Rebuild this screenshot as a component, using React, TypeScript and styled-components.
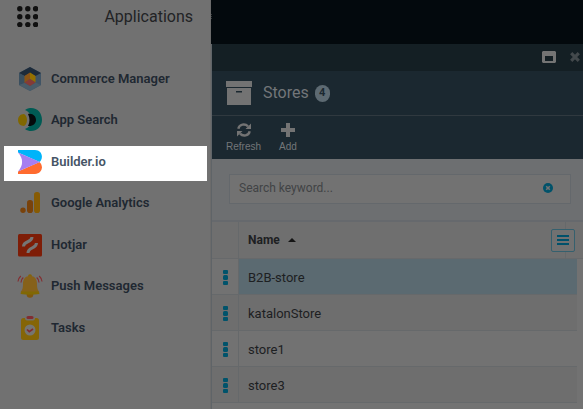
import React from "react";
import styled, { createGlobalStyle } from "styled-components";

const GlobalStyle = createGlobalStyle`
  *, *::before, *::after { box-sizing: border-box; }
  html, body { margin: 0; height: 100%; overflow: hidden; }
  body { background: #737373; font-family: Roboto, "Liberation Sans", sans-serif; color: #1d2022; }
  #root { height: 100%; }
  button { border: 0; padding: 0; background: none; font: inherit; color: inherit; cursor: pointer; }
  svg { display: block; flex: none; }
`;

const Page = styled.div`
  display: grid;
  grid-template-columns: 211px minmax(0, 1fr);
  height: 100vh;
`;

const Sidebar = styled.aside`
  background: #717171;
  border-right: 1px solid #6b6b6b;
`;

const SidebarHeader = styled.header`
  display: flex;
  justify-content: space-between;
  align-items: center;
  height: 33px;
  padding: 0 17px;
`;

const SidebarTitle = styled.h1`
  margin: 0;
  font-size: 16px;
  line-height: 24px;
  font-weight: 400;
  color: #222325;
`;

const AppList = styled.ul`
  display: grid;
  grid-template-rows: repeat(7, 1fr);
  height: 290px;
  margin: 25px 3px 0 4px;
  padding: 0;
  list-style: none;
`;

const AppLink = styled.a<{ $active?: boolean }>`
  display: flex;
  align-items: center;
  gap: 8px;
  height: 35px;
  margin-top: 5px;
  padding: 0 13px 3px;
  background: ${(p) => (p.$active ? "#ffffff" : "transparent")};
  color: ${(p) => (p.$active ? "#465566" : "#202831")};
  font-size: 13px;
  line-height: 16px;
  font-weight: 600;
  text-decoration: none;
`;

const Workspace = styled.main`
  display: flex;
  flex-direction: column;
  min-width: 0;
`;

const TopBar = styled.div`
  height: 44px;
  flex: none;
  padding-top: 14px;
  background: #03090d;
`;

const Blade = styled.section`
  flex: 1;
  display: flex;
  flex-direction: column;
  border-left: 1px solid #5f6468;
  background: #737373;
`;

const WindowBar = styled.div`
  display: flex;
  justify-content: flex-end;
  align-items: center;
  gap: 14px;
  height: 27px;
  padding: 0 3px 2px 0;
  background: #141f24;
`;

const BladeHeader = styled.header`
  display: flex;
  align-items: center;
  height: 45px;
  padding: 0 14px;
  background: #1b2830;
  border-bottom: 1px solid #30393f;
`;

const BladeTitle = styled.h2`
  margin: 0 6px 0 11px;
  font-size: 16px;
  line-height: 24px;
  font-weight: 400;
  color: #737679;
`;

const Count = styled.span`
  width: 15px;
  height: 17px;
  border-radius: 8px;
  background: #5d6a72;
  color: #1b2830;
  font-size: 11px;
  line-height: 16px;
  font-weight: 700;
  text-align: center;
`;

const Toolbar = styled.div`
  display: flex;
  gap: 18px;
  height: 43px;
  padding: 7px 14px 0;
  background: #1b2830;
`;

const ToolButton = styled.button`
  display: flex;
  flex-direction: column;
  align-items: center;
  gap: 4px;
  color: #737679;
  font-family: "Liberation Sans", Arial, sans-serif;
  font-size: 10px;
  line-height: 12px;
`;

const SearchArea = styled.div`
  padding: 15px 12px 15px 17px;
  height: 63px;
  background: #6d6f71;
  border-bottom: 2px solid #66696d;
`;

const SearchBox = styled.div`
  display: flex;
  align-items: center;
  height: 30px;
  padding: 0 17px 2px 9px;
  background: #727272;
  border: 1px solid #64686c;
`;

const SearchInput = styled.input`
  flex: 1;
  min-width: 0;
  padding: 0;
  border: 0;
  outline: 0;
  background: transparent;
  font: 400 12px/16px Roboto, "Liberation Sans", sans-serif;
  color: #1d2022;
  &::placeholder { color: #414345; opacity: 1; }
`;

const Table = styled.table`
  width: 100%;
  border-collapse: separate;
  border-spacing: 0;
  table-layout: fixed;
  font-size: 13px;
  line-height: 16px;
  text-align: left;
`;

const Column = styled.col<{ $width?: number }>`
  width: ${(p) => (p.$width ? `${p.$width}px` : "auto")};
`;

const HeadCell = styled.th`
  height: 37px;
  padding: 0 0 0 9px;
  background: #6f6f6f;
  border-right: 1px solid #66696b;
  border-bottom: 1px solid #67696b;
  font-size: 12px;
  &:last-child { padding: 0; border-right: 0; }
`;

const SortButton = styled.button`
  display: flex;
  align-items: center;
  gap: 8px;
  font-weight: 700;
`;

const ColumnsButton = styled.button`
  display: grid;
  place-items: center;
  width: 24px;
  height: 23px;
  margin-left: -15px;
  background: #717171;
  border: 1px solid #35606e;
  border-radius: 2px;
`;

const Row = styled.tr<{ $selected?: boolean }>`
  --row-color: #727272;
  &:nth-child(even) { --row-color: #6e6e6e; }
  td:nth-child(2) { background: ${(p) => (p.$selected ? "#5b6a71" : "var(--row-color)")}; }
`;

const Cell = styled.td`
  height: 36px;
  padding: 2px 0 0 9px;
  background: var(--row-color);
  border-bottom: 1px solid #66696b;
  &:first-child { padding: 1px 0 0 11px; border-right: 1px solid #66696b; }
`;

const Gutter = styled.td`
  padding: 0;
  background: #727272;
`;

const RowMenu = styled.button`
  display: block;
`;

const DotsIcon = () => (
  <svg width="21" height="21" viewBox="0 0 21 21" fill="#101010">
    {[2.8, 10.8, 18.6].map((y) =>
      [2.8, 10.8, 18.6].map((x) => <circle key={`${x}-${y}`} cx={x} cy={y} r="2.7" />)
    )}
  </svg>
);

const CubeIcon = () => (
  <svg width="26" height="26" viewBox="0 0 26 26">
    <path d="M13 1 24 7v12L13 25 2 19V7z" fill="#405465" />
    <path d="M13 1 24 7 18.500 10 13 7 7.500 10 2 7z" fill="#1d2b3a" />
    <path d="M2 7l5.500 3v7L2 19z" fill="#3a4f5f" />
    <path d="M13 25l11-6-5.500-2.500L13 20l-5.500-3L2 19z" fill="#4a5d6a" />
    <path d="M13 6.500 7.500 10v7L13 13z" fill="#8b5415" />
    <path d="M13 6.500 18.500 10v6.500L13 13z" fill="#957000" />
    <path d="M13 13l5.500 3.500L13 20l-5.500-3.500z" fill="#853b37" />
  </svg>
);

const AppSearchIcon = () => (
  <svg width="26" height="26" viewBox="0 0 26 26">
    <path d="M8 3C11 1 13 1 14 1c7 0 11 5.500 11 12s-5 11-11 11c-2 0-4-.500-6-2C17 19 17 7 8 3z" fill="#005b54" />
    <path d="M11 7c5-1 8 2.500 8 6s-3 6.500-8 6c2-4 2-8 0-12z" fill="#050a0b" />
    <path d="M7 7c4 2 4 10 0 12-8 0-8-12 0-12z" fill="#806700" />
  </svg>
);

const BuilderIcon = () => (
  <svg width="26" height="26" viewBox="0 0 26 26">
    <path d="M1 1h17C25 1 27 9 22.500 13L1 3.500z" fill="#00b4fa" />
    <path d="M1 25h17c7 0 9-8 4.500-12L1 22.500z" fill="#ff6b2f" />
    <path d="M1 3.500 23 13 1 22.500c5.500-6 5.500-13 0-19z" fill="#a67ef1" />
  </svg>
);

const AnalyticsIcon = () => (
  <svg width="26" height="26" viewBox="0 0 26 26">
    <rect x="17" y="2" width="6" height="21" rx="2.800" fill="#875b04" />
    <rect x="10" y="10" width="6" height="13" rx="2.800" fill="#79420b" />
    <circle cx="6" cy="20.300" r="2.700" fill="#79420b" />
  </svg>
);

const HotjarIcon = () => (
  <svg width="26" height="26" viewBox="0 0 26 26">
    <rect x="1" y="2" width="24" height="22.500" rx="1.500" fill="#7e1d07" />
    <path d="M15 5c0 6-8.500 3.500-8.500 9.500M19.500 11c0 6-8.500 3.500-8.500 10" fill="none" stroke="#757575" strokeWidth="3" />
  </svg>
);

const BellIcon = () => (
  <svg width="26" height="26" viewBox="0 0 26 26">
    <circle cx="13" cy="21.500" r="3.300" fill="#80570d" />
    <circle cx="13" cy="3.200" r="2" fill="#846408" />
    <path d="M13 3c5 0 7 3.500 7 8 0 5 1 6 2.500 8.500h-19C5 17 6 16 6 11c0-4.500 2-8 7-8z" fill="#86611a" />
    <path d="M4.500 18.500h17l1 2.500c-6 1-13 1-19 0z" fill="#806804" />
    <path d="M6.300 4.500C4.500 6 4 8 4 9.500M3.800 3C1.700 5 1 7 1 8.500M19.700 4.500C21.500 6 22 8 22 9.500M22.200 3C24.300 5 25 7 25 8.500" fill="none" stroke="#842e31" strokeWidth="1.200" />
  </svg>
);

const TasksIcon = () => (
  <svg width="26" height="26" viewBox="0 0 26 26">
    <rect x="4" y="3" width="18" height="22" rx="2.500" fill="#856507" />
    <rect x="8" y="1" width="10" height="4.500" rx="2" fill="#72706b" />
    <rect x="9.500" y="1" width="7" height="3" rx="1.500" fill="#822c31" />
    <circle cx="13" cy="15" r="5.500" fill="#757573" />
    <path d="M10 14.500l2.300 2.200L16 14" fill="none" stroke="#822c31" strokeWidth="1.700" />
  </svg>
);

const WindowIcon = () => (
  <svg width="14" height="12" viewBox="0 0 14 12">
    <path fillRule="evenodd" d="M1 0h12l1 1v10l-1 1H1l-1-1V1zM3 5v5h8V5z" fill="#747474" />
  </svg>
);

const CloseIcon = () => (
  <svg width="10" height="10" viewBox="0 0 10 10">
    <path d="M1.200 1.200l7.600 7.600M8.800 1.200L1.200 8.800" stroke="#43494c" strokeWidth="3.200" />
  </svg>
);

const ArchiveIcon = () => (
  <svg width="26" height="24" viewBox="0 0 26 24" fill="#737373">
    <path d="M0 0h26v6H0z" />
    <path fillRule="evenodd" d="M1 7h24v17H1zM10 10v1.500h6V10z" />
  </svg>
);

const RefreshIcon = () => (
  <svg width="14" height="14" viewBox="0 0 14 14">
    <path d="M1.300 5.800C2.300 1 8 .300 11 3.300M12.700 8.200C11.700 13 6 13.700 3 10.700" fill="none" stroke="#737373" strokeWidth="2.400" />
    <path d="M14 .500v5.500H8.500zM0 13.500V8h5.500z" fill="#737373" />
  </svg>
);

const PlusIcon = () => (
  <svg width="14" height="14" viewBox="0 0 14 14" fill="#737373">
    <path d="M5 0h4v5h5v4H9v5H5V9H0V5h5z" />
  </svg>
);

const ClearIcon = () => (
  <svg width="10" height="10" viewBox="0 0 10 10">
    <circle cx="5" cy="5" r="5" fill="#00526a" />
    <path d="M3.200 3.200l3.600 3.600M6.800 3.200L3.200 6.800" stroke="#727272" strokeWidth="1.600" />
  </svg>
);

const SortIcon = () => (
  <svg width="8" height="4" viewBox="0 0 8 4"><path d="M4 0l4 4H0z" fill="#151515" /></svg>
);

const LinesIcon = () => (
  <svg width="12" height="10" viewBox="0 0 12 10"><path d="M0 0h12v2H0zM0 4h12v2H0zM0 8h12v2H0z" fill="#00516b" /></svg>
);

const MenuDots = () => (
  <svg width="5" height="15" viewBox="0 0 5 15" fill="#00536b">
    <rect width="5" height="4" rx="1" />
    <rect y="5" width="5" height="5" rx="1.500" />
    <rect y="11" width="5" height="4" rx="1" />
  </svg>
);

const EdgeMark = () => (
  <svg width="2" height="6" viewBox="0 0 2 6"><path d="M0 0h1v1H0zM0 2h1v1H0zM0 4h1v1H0z" fill="#34383a" /></svg>
);

const apps = [
  { name: "Commerce Manager", Icon: CubeIcon },
  { name: "App Search", Icon: AppSearchIcon },
  { name: "Builder.io", Icon: BuilderIcon, active: true },
  { name: "Google Analytics", Icon: AnalyticsIcon },
  { name: "Hotjar", Icon: HotjarIcon },
  { name: "Push Messages", Icon: BellIcon },
  { name: "Tasks", Icon: TasksIcon },
];

const stores = ["B2B-store", "katalonStore", "store1", "store3"];

export default function App() {
  return (
    <Page>
      <GlobalStyle />
      <Sidebar>
        <SidebarHeader>
          <button aria-label="Toggle applications"><DotsIcon /></button>
          <SidebarTitle>Applications</SidebarTitle>
        </SidebarHeader>
        <nav aria-label="Applications">
          <AppList>
            {apps.map(({ name, Icon, active }) => (
              <li key={name}>
                <AppLink href="#" $active={active}><Icon />{name}</AppLink>
              </li>
            ))}
          </AppList>
        </nav>
      </Sidebar>
      <Workspace>
        <TopBar><EdgeMark /></TopBar>
        <Blade>
          <WindowBar>
            <button aria-label="Maximize"><WindowIcon /></button>
            <button aria-label="Close"><CloseIcon /></button>
          </WindowBar>
          <BladeHeader>
            <ArchiveIcon />
            <BladeTitle>Stores</BladeTitle>
            <Count>{stores.length}</Count>
          </BladeHeader>
          <Toolbar>
            <ToolButton><RefreshIcon />Refresh</ToolButton>
            <ToolButton><PlusIcon />Add</ToolButton>
          </Toolbar>
          <SearchArea>
            <SearchBox>
              <SearchInput type="text" aria-label="Search keyword" placeholder="Search keyword..." />
              <button aria-label="Clear search"><ClearIcon /></button>
            </SearchBox>
          </SearchArea>
          <Table>
            <colgroup>
              <Column $width={27} />
              <Column />
              <Column $width={11} />
              <Column $width={6} />
            </colgroup>
            <thead>
              <tr>
                <HeadCell aria-label="Actions" />
                <HeadCell><SortButton>Name<SortIcon /></SortButton></HeadCell>
                <HeadCell colSpan={2} aria-label="Columns">
                  <ColumnsButton aria-label="Choose columns"><LinesIcon /></ColumnsButton>
                </HeadCell>
              </tr>
            </thead>
            <tbody>
              {stores.map((store, i) => (
                <Row key={store} $selected={i === 0}>
                  <Cell><RowMenu aria-label={`${store} actions`}><MenuDots /></RowMenu></Cell>
                  <Cell colSpan={2}>{store}</Cell>
                  <Gutter />
                </Row>
              ))}
            </tbody>
          </Table>
        </Blade>
      </Workspace>
    </Page>
  );
}
